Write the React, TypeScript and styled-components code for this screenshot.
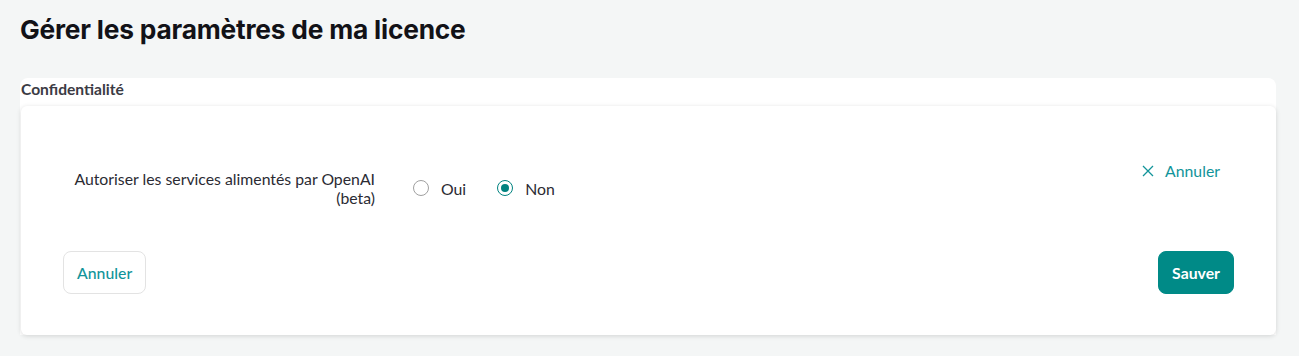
import React, { useState } from 'react';
import styled, { createGlobalStyle } from 'styled-components';

// styles
const GlobalStyle = createGlobalStyle`
  html, body {
    margin: 0;
    padding: 0;
    background-color: #f4f6f6;
  }
  body {
    font-family: Lato, "Open Sans", sans-serif;
    color: #2b2b33;
  }
`;

const Page = styled.main`
  width: 1299px;
  height: 356px;
  box-sizing: border-box;
  padding: 14px 23px 0 20px;
  background-color: #f4f6f6;
`;

const Title = styled.h1`
  margin: 0;
  font-family: Inter, sans-serif;
  font-size: 26.3px;
  font-weight: 700;
  line-height: 32px;
  color: #121217;
  letter-spacing: -0.2px;
`;

const Section = styled.section`
  margin-top: 32px;
  background-color: #ffffff;
  border-radius: 8px 8px 0 0;
`;

const SectionLabel = styled.h2`
  margin: 0;
  padding: 1px 1px 0;
  height: 27px;
  font-size: 15.6px;
  font-weight: 700;
  line-height: 20px;
  color: #3b3b44;
`;

const Card = styled.div`
  margin-left: 1px;
  padding: 63px 42px 41px;
  background-color: #ffffff;
  border-radius: 6px;
  box-shadow: 0 1px 5px rgba(0, 0, 0, 0.14);
`;

const Row = styled.div`
  display: flex;
  align-items: center;
`;

const FieldLabel = styled.label`
  width: 312px;
  text-align: right;
  font-size: 15.8px;
  line-height: 19px;
  color: #2b2b33;
`;

const RadioGroup = styled.div`
  display: flex;
  align-items: center;
  gap: 31px;
  margin-left: 38px;
  flex: 1;
`;

const RadioOption = styled.label`
  display: flex;
  align-items: center;
  gap: 12px;
  font-size: 15.8px;
  color: #2b2b33;
  cursor: pointer;
`;

const RadioCircle = styled.span<{ $checked: boolean }>`
  width: 16px;
  height: 16px;
  box-sizing: border-box;
  border-radius: 50%;
  border: 1px solid ${(p) => (p.$checked ? '#00827f' : '#a0a0a0')};
  display: flex;
  align-items: center;
  justify-content: center;
  &::after {
    content: '';
    width: 8px;
    height: 8px;
    border-radius: 50%;
    background-color: ${(p) => (p.$checked ? '#00827f' : 'transparent')};
  }
`;

const LinkButton = styled.button`
  align-self: flex-start;
  margin-top: -8px;
  margin-right: 14px;
  display: flex;
  align-items: center;
  gap: 11px;
  padding: 0;
  border: none;
  background: transparent;
  font-family: Lato, sans-serif;
  font-size: 15.8px;
  color: #12949a;
  cursor: pointer;
`;

const Footer = styled.div`
  display: flex;
  justify-content: space-between;
  margin-top: 44px;
`;

const Button = styled.button<{ $primary?: boolean }>`
  height: 43px;
  padding: 0 13px;
  border-radius: 8px;
  font-family: Lato, sans-serif;
  font-size: 15.8px;
  font-weight: ${(p) => (p.$primary ? 700 : 500)};
  border: 1px solid ${(p) => (p.$primary ? '#008a87' : '#e3e3e3')};
  background-color: ${(p) => (p.$primary ? '#008a87' : '#ffffff')};
  color: ${(p) => (p.$primary ? '#ffffff' : '#12949a')};
  cursor: pointer;
`;

const CloseIcon = () => (
  <svg width="12" height="12" viewBox="0 0 12 12" fill="none">
    <path d="M1 1L11 11M11 1L1 11" stroke="#12949a" strokeWidth="1.3" />
  </svg>
);

// logic
const App = () => {
  const [value, setValue] = useState<'oui' | 'non'>('non');

  return (
    <Page>
      <GlobalStyle />
      <Title>Gérer les paramètres de ma licence</Title>
      <Section>
        <SectionLabel>Confidentialité</SectionLabel>
        <Card>
          <Row>
            <FieldLabel>
              Autoriser les services alimentés par OpenAI
              <br />
              (beta)
            </FieldLabel>
            <RadioGroup>
              <RadioOption onClick={() => setValue('oui')}>
                <RadioCircle $checked={value === 'oui'} />
                Oui
              </RadioOption>
              <RadioOption onClick={() => setValue('non')}>
                <RadioCircle $checked={value === 'non'} />
                Non
              </RadioOption>
            </RadioGroup>
            <LinkButton>
              <CloseIcon />
              Annuler
            </LinkButton>
          </Row>
          <Footer>
            <Button>Annuler</Button>
            <Button $primary>Sauver</Button>
          </Footer>
        </Card>
      </Section>
    </Page>
  );
};

export default App;
